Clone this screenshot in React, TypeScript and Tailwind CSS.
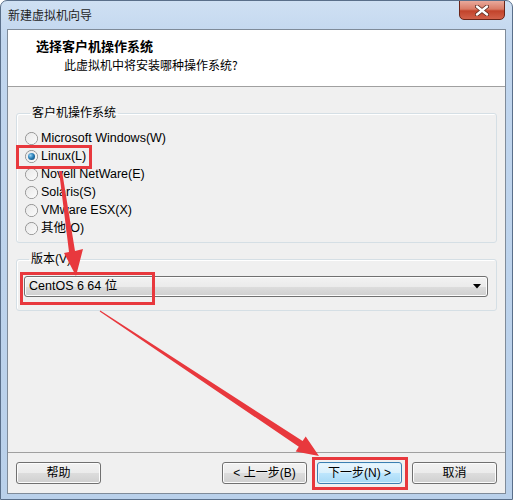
import React from 'react'

const OPTIONS = [
    'Microsoft Windows(W)',
    'Linux(L)',
    'Novell NetWare(E)',
    'Solaris(S)',
    'VMware ESX(X)',
    '其他(O)',
]

function Radio({ checked }: { checked?: boolean }) {
    return (
        <div className="w-[13px] h-[13px] rounded-full border border-[#8d8d8d] bg-gradient-to-br from-[#cfcfcf] via-[#ededed] to-white flex items-center justify-center shrink-0">
            <div className="w-[11px] h-[11px] rounded-full bg-gradient-to-br from-[#e8e8e8] to-[#fbfbfb] flex items-center justify-center">
                {checked && (
                    <div className="w-[7px] h-[7px] rounded-full bg-[radial-gradient(circle_at_35%_35%,#9ad4f4_0%,#2a80b9_45%,#0d3d62_100%)]" />
                )}
            </div>
        </div>
    )
}

function Button({ label, primary }: { label: string; primary?: boolean }) {
    return (
        <div
            className={
                primary
                    ? 'w-[85px] h-[22px] rounded-[3px] border border-[#3c7fb1] bg-[linear-gradient(#eaf6fd_0%,#d9f0fc_50%,#bee6fd_50%,#a7d9f5_100%)] flex items-center justify-center text-[12px] text-black shadow-[inset_0_0_0_1px_#dff3fd]'
                    : 'w-[85px] h-[22px] rounded-[3px] border border-[#707070] bg-[linear-gradient(#f2f2f2_0%,#ebebeb_50%,#dddddd_50%,#cfcfcf_100%)] flex items-center justify-center text-[12px] text-black shadow-[inset_0_0_0_1px_#fcfcfc]'
            }
        >
            {label}
        </div>
    )
}

export default function App() {
    return (
        <div className="w-[513px] h-[500px] bg-white font-['Segoe_UI','Liberation_Sans','Noto_Sans_CJK_SC',sans-serif] text-[12px] text-black">
            <div className="relative w-[513px] h-[500px] rounded-t-[7px] border border-[#5a6f8a] bg-[linear-gradient(#cfe0f3_0%,#c1d6ee_8%,#b9d0ea_100%)] flex flex-col overflow-hidden">
                {/* title bar */}
                <div className="h-[28px] flex items-center pl-[7px] text-[12px] leading-none text-[#1e1e1e] font-['Noto_Sans_CJK_SC',sans-serif]">
                    新建虚拟机向导
                </div>

                {/* close button */}
                <div className="absolute top-[-1px] right-[7px] w-[46px] h-[20px] rounded-b-[5px] border border-[#6b2519] bg-[linear-gradient(#e9a99b_0%,#d97b66_45%,#c2432b_55%,#d2614a_100%)] flex items-center justify-center">
                    <svg width="14" height="11" viewBox="0 0 14 11">
                        <path d="M2 1.5 L12 9.5 M12 1.5 L2 9.5" stroke="#5a2a20" strokeWidth="4" strokeLinecap="round" />
                        <path d="M2 1.5 L12 9.5 M12 1.5 L2 9.5" stroke="#ffffff" strokeWidth="2.4" strokeLinecap="round" />
                    </svg>
                </div>

                {/* dialog content */}
                <div className="ml-[6px] w-[499px] h-[465px] border border-[#7f8b99] bg-[#f0f0f0] flex flex-col">
                    {/* header */}
                    <div className="h-[57px] bg-white border-b border-[#a0a0a0] pt-[7px] shrink-0">
                        <div className="pl-[28px] h-[17px] leading-[17px] text-[13px] font-bold font-['Noto_Sans_CJK_SC',sans-serif]">
                            选择客户机操作系统
                        </div>
                        <div className="pl-[56px] mt-[2px] h-[17px] leading-[17px] text-[12px] font-['Noto_Sans_CJK_SC',sans-serif]">
                            此虚拟机中将安装哪种操作系统?
                        </div>
                    </div>

                    {/* body */}
                    <div className="flex-1 flex flex-col px-[8px] pt-[18px]">
                        <fieldset className="border border-[#d5dfe5] rounded-[3px] shadow-[inset_1px_1px_0_#ffffff] pl-[8px] pt-[8px] pb-[5px]">
                            <legend className="ml-[5px] px-[2px] h-[16px] leading-[16px] text-[12px]">客户机操作系统</legend>
                            {OPTIONS.map((opt, i) => (
                                <div key={opt} className="h-[18px] flex items-center gap-[3px]">
                                    <Radio checked={i === 1} />
                                    <span className="leading-[18px] text-[12.5px]">{opt}</span>
                                </div>
                            ))}
                        </fieldset>

                        <fieldset className="mt-[8px] border border-[#d5dfe5] rounded-[3px] shadow-[inset_1px_1px_0_#ffffff] pl-[7px] pr-[8px] pt-[9px] pb-[13px]">
                            <legend className="ml-[5px] px-[2px] h-[16px] leading-[16px] text-[12px]">版本(V)</legend>
                            <div className="h-[21px] rounded-[3px] border border-[#707070] bg-[linear-gradient(#f2f2f2_0%,#ebebeb_50%,#dddddd_50%,#cfcfcf_100%)] shadow-[inset_0_0_0_1px_#fcfcfc] flex items-center pl-[4px] pr-[6px]">
                                <span className="flex-1 text-[12.5px]">CentOS 6 64 位</span>
                                <svg width="8" height="5" viewBox="0 0 8 5">
                                    <path d="M0 0 H8 L4 4.5 Z" fill="#000" />
                                </svg>
                            </div>
                        </fieldset>

                        <div className="flex-1" />
                    </div>

                    {/* footer */}
                    <div className="border-t border-[#a0a0a0] shrink-0 h-[41px] flex items-start pt-[9px] pl-[8px] pr-[8px]">
                        <Button label="帮助" />
                        <div className="flex-1" />
                        <div className="flex gap-[10px]">
                            <Button label="< 上一步(B)" />
                            <Button label="下一步(N) >" primary />
                            <Button label="取消" />
                        </div>
                    </div>
                </div>

                {/* red annotations */}
                <svg className="absolute left-[-1px] top-[-1px] pointer-events-none" width="513" height="500" viewBox="0 0 513 500">
                    <rect x="17.5" y="146.5" width="73" height="21" fill="none" stroke="#e8383d" strokeWidth="3" />
                    <rect x="21.5" y="273.5" width="132" height="30" fill="none" stroke="#e8383d" strokeWidth="3" />
                    <rect x="313.5" y="458.5" width="93" height="30" fill="none" stroke="#e8383d" strokeWidth="3" />
                    <polygon points="59,171 62,171 75,251 83,249 76,276 64,253 69,252" fill="#e8383d" />
                    <polygon points="100.3,310.6 302.6,441 305.7,436.4 319,456 295.7,451.4 298.8,446.8 99.7,311.4" fill="#e8383d" />
                </svg>
            </div>
        </div>
    )
}
